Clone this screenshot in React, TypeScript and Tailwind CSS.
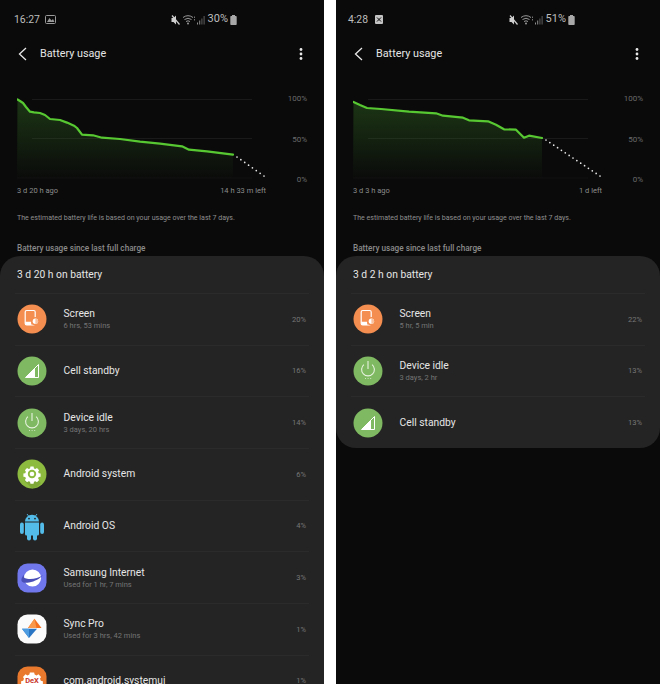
import React from "react";

type IconProps = { kind: string };

function AppIcon({ kind }: IconProps) {
  const common = { width: 30, height: 30, viewBox: "0 0 30 30" };
  if (kind === "screen")
    return (
      <svg {...common}>
        <circle cx="15" cy="15" r="14.5" fill="#f48e50" />
        <rect x="8.2" y="6.5" width="10" height="14.5" rx="1.5" fill="none" stroke="#fff" strokeWidth="1.2" />
        <path d="M8.2 17.8h6v3.2h-4.5a1.5 1.5 0 0 1-1.5-1.5z" fill="#fff" />
        <circle cx="18.4" cy="17.2" r="4.3" fill="#f48e50" />
        <circle cx="18.4" cy="17.2" r="2.7" fill="#fff" />
        <path d="M18.4 14.5a2.7 2.7 0 0 1 0 5.4z" fill="#f9c19d" />
      </svg>
    );
  if (kind === "cell")
    return (
      <svg {...common}>
        <circle cx="15" cy="15" r="14.5" fill="#7fb961" />
        <path d="M8.5 21.5 L21.5 8.5 V21.5 Z" fill="none" stroke="#fff" strokeWidth="1" />
        <path d="M8.5 21.5 L18 12 V21.5 Z" fill="#fff" />
      </svg>
    );
  if (kind === "idle")
    return (
      <svg {...common}>
        <circle cx="15" cy="15" r="14.5" fill="#7fb961" />
        <path d="M10.9 8.6 a6.4 6.4 0 1 0 8.2 0" fill="none" stroke="#e9f3e2" strokeWidth="1.1" />
        <path d="M15 5 V13" stroke="#e9f3e2" strokeWidth="1.1" />
        <path d="M12 22.5h1M14.6 22.5h1M17.2 22.5h1" stroke="#d5e8c9" strokeWidth="0.9" />
      </svg>
    );
  if (kind === "system")
    return (
      <svg {...common}>
        <circle cx="15" cy="15" r="14.5" fill="#8cbb40" />
        <path d="M15 15 L24 24 A13 13 0 0 1 15 29.5 L7 21.5Z" fill="#7ea938" />
        <path
          d="M13.2 6.8h3.6l.5 2.2 1.6.7 1.9-1.2 2.5 2.5-1.2 1.9.7 1.6 2.2.5v3.6l-2.2.5-.7 1.6 1.2 1.9-2.5 2.5-1.9-1.2-1.6.7-.5 2.2h-3.6l-.5-2.2-1.6-.7-1.9 1.2-2.5-2.5 1.2-1.9-.7-1.6-2.2-.5v-3.6l2.2-.5.7-1.6-1.2-1.9 2.5-2.5 1.9 1.2 1.6-.7z"
          transform="translate(15 15) scale(0.86) translate(-15 -15.5)"
          fill="#fff"
        />
        <circle cx="15" cy="15" r="4.2" fill="#8cbb40" />
        <circle cx="15" cy="15" r="2.3" fill="#fff" />
      </svg>
    );
  if (kind === "android")
    return (
      <svg {...common}>
        <path d="M10 3 l2 2.6M20 3 l-2 2.6" stroke="#53bce9" strokeWidth="0.9" />
        <path d="M8 10.5 a7 6.8 0 0 1 14 0z" fill="#53bce9" />
        <circle cx="12" cy="7.6" r="0.9" fill="#242424" />
        <circle cx="18" cy="7.6" r="0.9" fill="#242424" />
        <path d="M8 11.5h14v11.5a1.5 1.5 0 0 1-1.5 1.5h-11A1.5 1.5 0 0 1 8 23z" fill="#53bce9" />
        <rect x="3" y="11.5" width="3.8" height="11.5" rx="1.9" fill="#53bce9" />
        <rect x="23.2" y="11.5" width="3.8" height="11.5" rx="1.9" fill="#53bce9" />
        <rect x="10" y="22" width="4" height="7.5" rx="2" fill="#53bce9" />
        <rect x="16" y="22" width="4" height="7.5" rx="2" fill="#53bce9" />
      </svg>
    );
  if (kind === "internet")
    return (
      <svg {...common}>
        <rect x="0.5" y="0.5" width="29" height="29" rx="10" fill="#7077ec" />
        <circle cx="15.5" cy="15" r="8.6" fill="#fff" />
        <path d="M5 14.5 C3 19 6 20.5 12 19.5 C18 18.5 23 15.5 26 12 C22 15 16 16.5 11.5 16 C8 15.6 6 15 7 11.5 C6 12.5 5.5 13.5 5 14.5Z" fill="#4a4fb8" />
      </svg>
    );
  if (kind === "sync")
    return (
      <svg {...common}>
        <rect x="0.5" y="0.5" width="29" height="29" rx="10" fill="#fbfbfb" />
        <path d="M17.5 4.7 L24.5 14 H11 Z" fill="#f4701f" />
        <path d="M14.5 9 L17.5 4.7 L19.5 14 H11Z" fill="#f9974a" />
        <path d="M5 14.8 H20 L12 24Z" fill="#2a74c4" />
        <path d="M5 14.8 H12 V24Z" fill="#4d9be0" />
      </svg>
    );
  return (
    <svg {...common}>
      <rect x="0.5" y="0.5" width="29" height="29" rx="10" fill="#e9792d" />
      <path
        d="M12.5 5h5l.6 2.4 2.3 1 2.2-1.2 3 3-1.2 2.2 1 2.3 2.4.6v5l-2.4.6-1 2.3 1.2 2.2-3 3-2.2-1.2-2.3 1-.6 2.4h-5l-.6-2.4-2.3-1-2.2 1.2-3-3 1.2-2.2-1-2.3-2.4-.6v-5l2.4-.6 1-2.3-1.2-2.2 3-3 2.2 1.2 2.3-1z"
        transform="translate(15 15) scale(0.85) translate(-15 -15)"
        fill="#fff"
      />
      <text x="15" y="17.2" textAnchor="middle" fontSize="7.5" fontWeight="700" fill="#c9372c" fontFamily="Roboto, sans-serif">
        DeX
      </text>
    </svg>
  );
}

function StatusIcons() {
  return (
    <svg width="36" height="12" viewBox="0 0 36 12" className="shrink-0">
      <path d="M1.5 4h2l2.5-2.5v9L3.5 8h-2z" fill="#cfcfcf" />
      <path d="M2 1.5l7.5 9" stroke="#cfcfcf" strokeWidth="1.2" />
      <path d="M13 3.5a8.5 8.5 0 0 1 10 0M14.5 5.5a6 6 0 0 1 7 0M16 7.5a3.5 3.5 0 0 1 4 0" fill="none" stroke="#a8a8a8" strokeWidth="0.9" />
      <circle cx="18" cy="9.5" r="0.9" fill="#a8a8a8" />
      <path d="M24.5 2.5v1.5M24.5 5v1.5" stroke="#909090" strokeWidth="0.8" />
      <path d="M27 8.5h1v2h-1zM29.2 6.5h1v4h-1z" fill="#8f8f8f" />
      <path d="M31.4 4.5h1v6h-1zM33.6 2h1v8.5h-1z" fill="#5f5f5f" />
    </svg>
  );
}

function Battery() {
  return (
    <svg width="7" height="10" viewBox="0 0 7 10" className="shrink-0">
      <rect x="2" y="0" width="3" height="1.2" fill="#a8a8a8" />
      <rect x="0.3" y="1" width="6.4" height="9" rx="0.8" fill="#a8a8a8" />
    </svg>
  );
}

function Chart({ line, dots }: { line: number[][]; dots: number[][] }) {
  const pts = line.map((p) => p.join(",")).join(" ");
  const last = line[line.length - 1];
  const id = `fill${Math.round(last[0])}`;
  const len = Math.hypot(dots[1][0] - dots[0][0], dots[1][1] - dots[0][1]);
  const n = Math.round(len / 4.6) + 1;
  const dotList = Array.from({ length: n }, (_, i) => {
    const t = i / (n - 1);
    return [dots[0][0] + (dots[1][0] - dots[0][0]) * t, dots[0][1] + (dots[1][1] - dots[0][1]) * t];
  });
  return (
    <svg width="250" height="92" viewBox="17 93 250 92" className="shrink-0">
      <defs>
        <linearGradient id={id} x1="0" y1="0" x2="0" y2="1">
          <stop offset="0" stopColor="#3f8a2a" stopOpacity="0.34" />
          <stop offset="1" stopColor="#3f8a2a" stopOpacity="0.01" />
        </linearGradient>
      </defs>
      <path d="M32 99.5H252M32 138.5H252" stroke="#1a1a1a" strokeWidth="1" />
      <path d="M17 178H252" stroke="#111111" strokeWidth="1" />
      <polygon points={`17,178 ${pts} ${last[0]},178`} fill={`url(#${id})`} />
      <polyline points={pts} fill="none" stroke="#58c832" strokeWidth="2.2" strokeLinejoin="round" strokeLinecap="round" />
      {dotList.map((d, i) => (
        <circle key={i} cx={d[0]} cy={d[1]} r="0.85" fill="#e8e8e8" />
      ))}
    </svg>
  );
}

type Row = { icon: string; name: string; sub?: string; pct: string };

function UsageRow({ row }: { row: Row }) {
  return (
    <div className="mx-[15px] h-[51.7px] shrink-0 flex items-center pl-[2px] pr-[3px] border-t border-[#2b2b2b]">
      <div className="w-[46.5px] shrink-0 flex items-center">
        <AppIcon kind={row.icon} />
      </div>
      <div className="flex-1 min-w-0 flex flex-col">
        <div className="text-[10.3px] leading-[14px] text-[#e6e6e6]">{row.name}</div>
        {row.sub && <div className="text-[7.5px] leading-[10px] text-[#757575]">{row.sub}</div>}
      </div>
      <div className="text-[7.6px] text-[#767676]">{row.pct}</div>
    </div>
  );
}

type PhoneProps = {
  time: string;
  note: "gallery" | "x";
  battery: string;
  ago: string;
  left: string;
  line: number[][];
  dots: number[][];
  total: string;
  rows: Row[];
  fill: boolean;
  shift: string;
};

function Phone(p: PhoneProps) {
  return (
    <div className="w-[324px] h-[684px] shrink-0 bg-[#0a0a0a] flex flex-col overflow-hidden">
      <div className={`h-[39px] shrink-0 flex items-center ${p.note === "x" ? "pl-[12px] pr-[85px]" : "pl-[14px] pr-[87px]"} text-[#bdbdbd]`}>
        <span className="text-[10.4px]">{p.time}</span>
        {p.note === "gallery" ? (
          <svg width="11" height="9" viewBox="0 0 11 9" className="ml-[5px]">
            <rect x="0.5" y="0.5" width="10" height="8" rx="1" fill="none" stroke="#9a9a9a" />
            <path d="M2 7l2.5-4 2 2.5L8 4l1.5 3z" fill="#9a9a9a" />
          </svg>
        ) : (
          <svg width="8" height="9" viewBox="0 0 8 9" className="ml-[7px]">
            <rect x="0" y="0" width="8" height="9" rx="1" fill="#c4c4c4" />
            <path d="M2 2.5l4 4M6 2.5l-4 4" stroke="#0a0a0a" strokeWidth="1" />
          </svg>
        )}
        <div className="ml-auto flex items-center">
          <StatusIcons />
          <span className="text-[11px] ml-[2px] mr-[2px]">{p.battery}</span>
          <Battery />
        </div>
      </div>
      <div className={`h-[30.5px] shrink-0 flex items-center pl-[18px] pr-[21px] ${p.shift}`}>
        <svg width="9" height="14" viewBox="0 0 9 14">
          <path d="M8 1L1.5 7L8 13" fill="none" stroke="#e8e8e8" strokeWidth="1.3" />
        </svg>
        <span className="ml-[13px] text-[10.8px] text-[#e6e6e6]">Battery usage</span>
        <svg width="4" height="14" viewBox="0 0 4 14" className="ml-auto">
          <circle cx="2" cy="2.5" r="1.4" fill="#e8e8e8" />
          <circle cx="2" cy="7" r="1.4" fill="#e8e8e8" />
          <circle cx="2" cy="11.5" r="1.4" fill="#e8e8e8" />
        </svg>
      </div>
      <div className="mt-[23.5px] pl-[17px] pr-[17px] flex shrink-0">
        <Chart line={p.line} dots={p.dots} />
        <div className="flex-1 h-[92px] pt-[1px] flex flex-col justify-between items-end text-[8px] leading-[10px] text-[#6a6a6a]">
          <span>100%</span>
          <span>50%</span>
          <span>0%</span>
        </div>
      </div>
      <div className="mt-[1px] pl-[17px] w-[266px] flex justify-between text-[7.5px] leading-[10px] text-[#8c8c8c] shrink-0">
        <span>{p.ago}</span>
        <span>{p.left}</span>
      </div>
      <div className="mt-[16.5px] pl-[17px] text-[7.05px] leading-[10px] text-[#8f8f8f] shrink-0">
        The estimated battery life is based on your usage over the last 7 days.
      </div>
      <div className="mt-[20px] pl-[17px] text-[8.2px] leading-[10px] font-medium text-[#8a8a8a] shrink-0">
        Battery usage since last full charge
      </div>
      <div className={`mt-[3.5px] bg-[#242424] flex flex-col ${p.fill ? "rounded-t-[20px] flex-1" : "rounded-[20px]"} overflow-hidden`}>
        <div className="h-[37px] pt-[1px] shrink-0 flex items-center pl-[17px] text-[10.3px] text-[#e6e6e6]">{p.total}</div>
        {p.rows.map((r) => (
          <UsageRow key={r.name} row={r} />
        ))}
      </div>
    </div>
  );
}

const leftLine = [
  [17.5, 99.5], [20, 101], [23, 103], [26, 107], [30, 111.7], [34, 112.4], [40, 113], [45, 115], [50, 119], [60, 120], [67, 122.6], [74, 125.7], [77, 128], [82, 134.7],
  [93, 135.3], [102, 137.7], [120, 139], [140, 141.7], [160, 143.7], [182, 146.3], [189, 149.7], [207, 151.3], [233, 154.7],
];
const rightLine = [
  [17.5, 102], [24, 105], [31, 108], [45, 109], [73, 111.7], [100, 113.3], [107, 115.7], [127, 117.7], [133, 120.3], [152, 121.3], [160, 124.7], [168, 129.3], [180, 129.7], [188, 137.7], [193, 135.7], [206, 138],
];

export default function App() {
  return (
    <div className="w-[660px] h-[684px] bg-white flex justify-between overflow-hidden" style={{ fontFamily: "Roboto, 'Noto Sans', sans-serif" }}>
      <Phone
        time="16:27"
        note="gallery"
        battery="30%"
        ago="3 d 20 h ago"
        left="14 h 33 m left"
        line={leftLine}
        dots={[[237, 157], [264, 176]]}
        total="3 d 20 h on battery"
        fill
        shift=""
        rows={[
          { icon: "screen", name: "Screen", sub: "6 hrs, 53 mins", pct: "20%" },
          { icon: "cell", name: "Cell standby", pct: "16%" },
          { icon: "idle", name: "Device idle", sub: "3 days, 20 hrs", pct: "14%" },
          { icon: "system", name: "Android system", pct: "6%" },
          { icon: "android", name: "Android OS", pct: "4%" },
          { icon: "internet", name: "Samsung Internet", sub: "Used for 1 hr, 7 mins", pct: "3%" },
          { icon: "sync", name: "Sync Pro", sub: "Used for 3 hrs, 42 mins", pct: "1%" },
          { icon: "dex", name: "com.android.systemui", pct: "1%" },
        ]}
      />
      <Phone
        time="4:28"
        note="x"
        battery="51%"
        ago="3 d 3 h ago"
        left="1 d left"
        line={rightLine}
        dots={[[210, 140], [264, 176]]}
        total="3 d 2 h on battery"
        fill={false}
        shift="pb-[1px]"
        rows={[
          { icon: "screen", name: "Screen", sub: "5 hr, 5 min", pct: "22%" },
          { icon: "idle", name: "Device idle", sub: "3 days, 2 hr", pct: "13%" },
          { icon: "cell", name: "Cell standby", pct: "13%" },
        ]}
      />
    </div>
  );
}
